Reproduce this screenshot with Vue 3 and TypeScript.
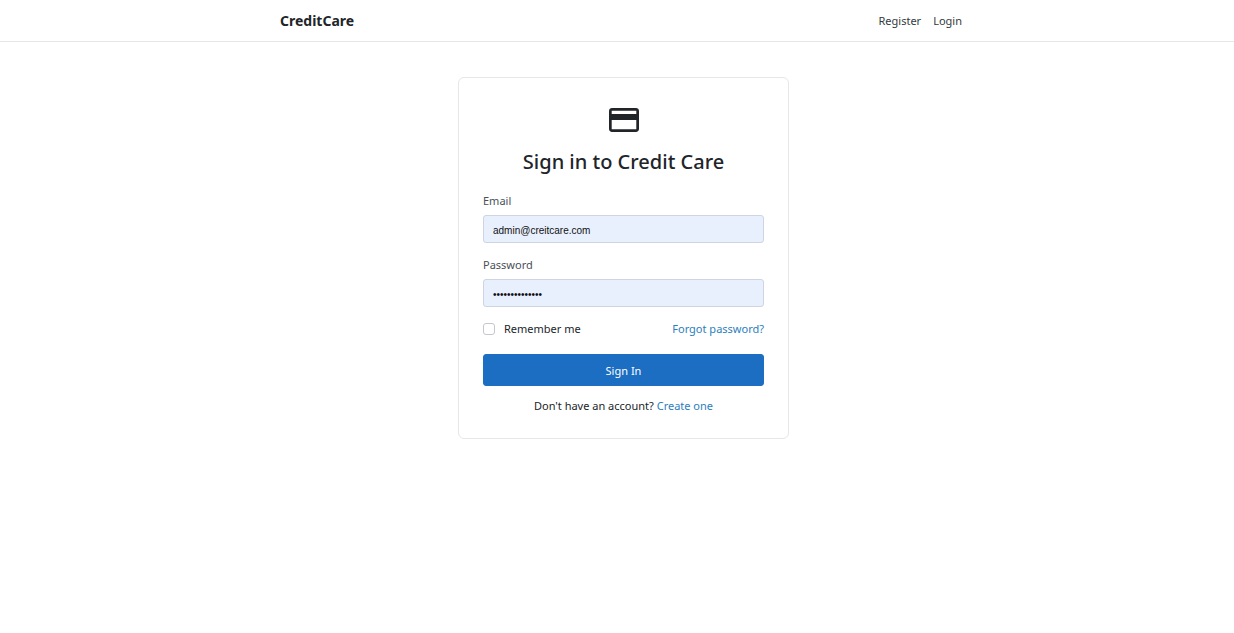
<script setup lang="ts">
import { ref } from 'vue'

const email = ref<string>('admin@creitcare.com')
const password = ref<string>('creditcare1234')
const remember = ref<boolean>(false)
</script>

<template>
  <div class="page">
    <header class="topbar">
      <div class="bar">
        <a class="brand" href="#">CreditCare</a>
        <nav class="links">
          <a href="#register">Register</a>
          <a href="#login">Login</a>
        </nav>
      </div>
    </header>

    <main class="content">
      <form class="card" @submit.prevent>
        <svg class="logo" viewBox="0 0 24 24" aria-hidden="true">
          <path
            fill="currentColor"
            d="M20 4H4c-1.11 0-1.99.89-1.99 2L2 18c0 1.11.89 2 2 2h16c1.11 0 2-.89 2-2V6c0-1.11-.89-2-2-2zm.2 14.2H3.8V12h16.4v6.2zm0-10.2H3.8V5.8h16.4V8z"
          />
        </svg>
        <h1 class="title">Sign in to Credit Care</h1>

        <label class="label" for="email">Email</label>
        <input id="email" v-model="email" class="field" type="email" />

        <label class="label" for="password">Password</label>
        <input id="password" v-model="password" class="field" type="password" />

        <div class="options">
          <label class="remember" for="remember">
            <input id="remember" v-model="remember" class="check" type="checkbox" />
            Remember me
          </label>
          <a class="link" href="#forgot">Forgot password?</a>
        </div>

        <button class="submit" type="submit">Sign In</button>

        <p class="signup">Don't have an account? <a class="link" href="#create">Create one</a></p>
      </form>
    </main>
  </div>
</template>

<style>
body {
  background: #fff;
}
</style>

<style scoped>
.page {
  font-family: 'Segoe UI', 'Noto Sans', 'Open Sans', sans-serif;
  font-size: 11px;
  line-height: 16px;
  color: #212529;
}

.topbar {
  border-bottom: 1px solid #e4e6e8;
  padding-left: 8px;
}

.bar {
  display: flex;
  align-items: center;
  justify-content: space-between;
  max-width: 682px;
  height: 41px;
  margin: 0 auto;
}

.brand {
  font-size: 14px;
  font-weight: 700;
  color: #212529;
  text-decoration: none;
}

.links {
  display: flex;
  gap: 12px;
}

.links a {
  color: #343a40;
  text-decoration: none;
}

.content {
  padding: 35px 0 35px 13px;
}

.card {
  box-sizing: border-box;
  display: flex;
  flex-direction: column;
  max-width: 331px;
  margin: 0 auto;
  padding: 24px;
  border: 1px solid #e6e7e9;
  border-radius: 6px;
}

.logo {
  align-self: center;
  width: 36px;
  height: 36px;
}

.title {
  margin: 10px 0 17px;
  font-size: 20px;
  font-weight: 500;
  line-height: 28px;
  text-align: center;
}

.label {
  margin-bottom: 6px;
  color: #495057;
}

.field {
  box-sizing: border-box;
  width: 100%;
  height: 28px;
  margin: 0 0 14px;
  padding: 2px 9px 0;
  border: 1px solid #ced4e0;
  border-radius: 3px;
  background: #e8f0fe;
  color: #111;
  font-family: 'Liberation Sans', Arial, sans-serif;
  font-size: 10px;
}

.options {
  display: flex;
  align-items: center;
  justify-content: space-between;
}

.remember {
  display: flex;
  align-items: center;
  gap: 9px;
}

.check {
  appearance: none;
  box-sizing: border-box;
  width: 12px;
  height: 12px;
  margin: 0;
  border: 1px solid #c4c8cc;
  border-radius: 3px;
  background: #fff;
}

.check:checked {
  background: #1b6ec2;
}

.link {
  color: #2c80bd;
  text-decoration: none;
}

.submit {
  height: 32px;
  margin: 17px 0 12px;
  padding: 0;
  border: 1px solid #1b6ec2;
  border-radius: 3px;
  background: #1b6ec2;
  color: #fff;
  font-family: inherit;
  font-size: 11px;
}

.signup {
  margin: 0;
  text-align: center;
}
</style>
